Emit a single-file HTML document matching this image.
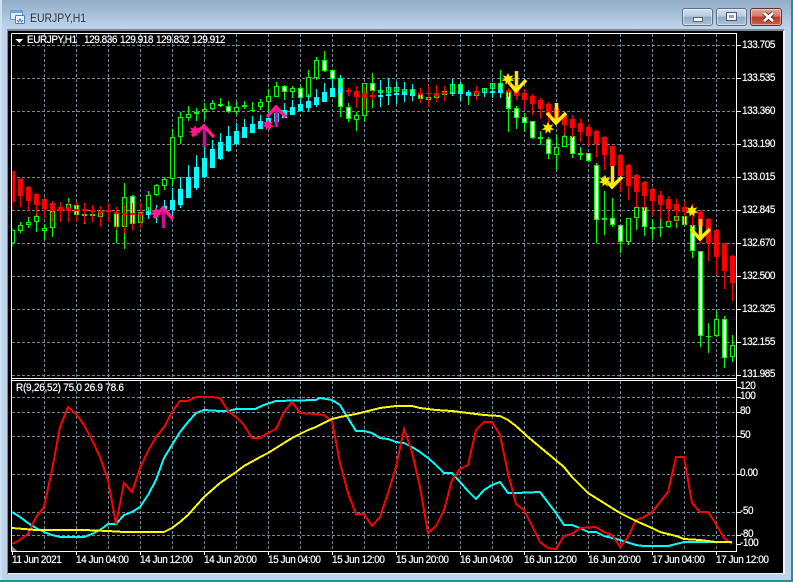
<!DOCTYPE html>
<html><head><meta charset="utf-8"><title>EURJPY,H1</title>
<style>
html,body{margin:0;padding:0;background:#bcd4ec}
#w{position:relative;width:793px;height:582px;overflow:hidden;background:linear-gradient(#93adc8 0,#a4bdd6 12px,#bdd4ec 28px,#bcd4ec 100%);font-family:"Liberation Sans",sans-serif}
#c{position:absolute;left:8px;top:31px;width:775px;height:542px;background:#000}
.t{position:absolute;color:#fff;font-size:10px;line-height:12px;white-space:pre;letter-spacing:-.45px;transform:scaleY(1.12);text-shadow:0 0 .6px #dfeaff}
.b{position:absolute;top:8px;height:16px;border:1px solid #5c6f84;border-radius:3px;background:linear-gradient(#cfdff0 0,#b6cce2 45%,#8fa9c4 50%,#aac3dc 100%);box-shadow:inset 0 0 0 1px rgba(255,255,255,.45)}
svg{position:absolute;left:0;top:0}
</style></head><body><div id="w">
<div style="position:absolute;left:0;top:0;width:2px;height:582px;background:#cfe0f0"></div>
<div style="position:absolute;left:7px;top:29px;width:777px;height:2px;background:#7d8894"></div>
<div style="position:absolute;left:7px;top:29px;width:1px;height:545px;background:#7d8894"></div>
<div style="position:absolute;left:8px;top:573px;width:777px;height:1px;background:#eef3f8"></div>
<div style="position:absolute;left:783px;top:31px;width:2px;height:543px;background:#eef3f8"></div>
<div style="position:absolute;left:0;top:580px;width:793px;height:2px;background:#2a8c96"></div>
<div style="position:absolute;left:791px;top:0;width:2px;height:582px;background:#2a8c96"></div>
<div id="c"></div>
<svg width="793" height="582" viewBox="0 0 793 582" shape-rendering="crispEdges">
<defs>
<clipPath id="m"><rect x="12" y="34" width="724" height="344"/></clipPath>
<clipPath id="s"><rect x="12" y="381" width="724" height="170"/></clipPath>
<path id="st" d="M0-6L1.6-2.6 5.2-3.6 3.2-.6 6 1.6 2.4 2 2.4 5.6 0 3 -2.4 5.6-2.4 2-6 1.6-3.2-.6-5.2-3.6-1.6-2.6Z"/>
</defs>
<g shape-rendering="auto">
<rect x="10.5" y="10.5" width="12" height="9" rx="1" fill="#dfeaf7" stroke="#5b8fd0"/>
<rect x="10.5" y="10.5" width="12" height="2.5" fill="#6fa3e0"/>
<rect x="15.5" y="15.5" width="9" height="8" rx="1" fill="#f2f7fd" stroke="#4a7fc4"/>
<path d="M17 20l1.500 2 1.500-3 1.500 3 1.500-2" fill="none" stroke="#3d74bd"/>
</g>
<path stroke="#778899" fill="none" stroke-dasharray="3 2" d="M12 45.500H736M12 78.500H736M12 111.500H736M12 144.500H736M12 177.500H736M12 210.500H736M12 243.500H736M12 276.500H736M12 309.500H736M12 342.500H736M12 375.500H736M12 397.500H736M12 412.500H736M12 436.500H736M12 474.500H736M12 512.500H736M12 535.500H736"/>
<path stroke="#778899" fill="none" stroke-dasharray="3 2" d="M44.500 34V378M76.500 34V378M108.500 34V378M140.500 34V378M172.500 34V378M204.500 34V378M236.500 34V378M268.500 34V378M300.500 34V378M332.500 34V378M364.500 34V378M396.500 34V378M428.500 34V378M460.500 34V378M492.500 34V378M524.500 34V378M556.500 34V378M588.500 34V378M620.500 34V378M652.500 34V378M684.500 34V378M716.500 34V378M44.500 381V551M76.500 381V551M108.500 381V551M140.500 381V551M172.500 381V551M204.500 381V551M236.500 381V551M268.500 381V551M300.500 381V551M332.500 381V551M364.500 381V551M396.500 381V551M428.500 381V551M460.500 381V551M492.500 381V551M524.500 381V551M556.500 381V551M588.500 381V551M620.500 381V551M652.500 381V551M684.500 381V551M716.500 381V551"/>
<g clip-path="url(#m)" fill="none" transform="translate(.5 0)">
<path stroke="#00ff00" d="M12 228V247M20 222V233M28 217V228M36 211V232M44 224V240M52 201V237M60 205V210M68 198V212M76 203V216M84 212V224M92 213V218M100 210V226M108 210V212M116 208V243M124 183V249M132 195V224M140 210V224M148 191V214M156 184V196M164 177V190M172 129V185M180 112V144M188 106V121M196 108V121M204 103V119M212 100V110M220 98V107M228 101V113M236 102V115M244 101V109M252 102V111M260 99V110M268 89V113M276 82V97M284 85V100M292 86V98M300 86V98M308 70V97M316 57V80M324 51V72M332 70V79M340 75V117M348 103V122M356 112V131M364 83V122M372 73V108M380 88V94M388 78V93M396 84V93M404 85V93M412 88V97M420 88V103M428 91V107M436 93V99M444 87V96M452 79V96M460 84V94M468 90V105M476 90V97M484 88V93M492 83V92M500 70V90M508 88V132M516 106V129M524 113V132M532 121V139M540 131V145M548 137V159M556 135V170M564 135V147M572 136V158M580 147V160M588 153V162M596 163V243M604 191V235M612 198V227M620 225V253M628 218V245M636 207V230M644 207V236M652 219V239M660 218V237M668 221V228M676 216V228M684 216V226M692 225V258M700 251V347M708 323V353M716 311V337M724 316V368M732 335V362"/>
<path stroke="#00ff00" stroke-width="5" d="M12 230V243M20 225V231M28 222V225M36 216V222M44 228V231M52 211V228M60 207V209M68 204V210M76 205V215M84 214V216M92 214V216M100 212V217M108 210V212M116 212V227M124 197V227M132 196V224M140 212V223M148 195V212M156 185V195M164 179V186M172 137V179M180 117V137M188 114V118M196 112V114M204 109V112M212 103V109M220 104V106M228 106V112M236 107V112M244 105V107M252 110V111M260 102V107M268 96V102M276 86V97M284 86V92M292 88V92M300 88V98M308 77V97M316 60V78M324 60V71M332 70V79M340 78V107M348 107V119M356 115V120M364 83V116M372 83V91M380 90V93M388 87V93M396 87V92M404 89V92M412 89V96M420 93V99M428 97V100M436 95V98M444 91V95M452 84V93M460 84V93M468 92V96M476 92V96M484 88V93M492 83V89M500 83V90M508 92V109M516 108V118M524 117V123M532 121V138M540 137V139M548 139V154M556 147V155M564 136V147M572 136V154M580 153V155M588 153V161M596 165V220M604 218V220M612 218V225M620 225V242M628 218V242M636 207V218M644 207V227M652 227V229M660 227V228M668 221V227M676 216V221M684 216V225M692 225V251M700 251V336M708 336V337M716 319V336M724 319V358M732 345V357"/>
<path stroke="#000" stroke-width="3" d="M12 231V242M20 226V230M28 223V224M36 217V221M44 229V230M52 212V227M68 205V209M100 213V216M124 198V226M140 213V222M148 196V211M156 186V194M164 180V185M172 138V178M180 118V136M188 115V117M204 110V111M212 104V108M236 108V111M260 103V106M268 97V101M276 87V96M292 89V91M308 78V96M316 61V77M356 116V119M364 84V115M380 91V92M388 88V92M396 88V91M404 90V91M428 98V99M436 96V97M444 92V94M452 85V92M476 93V95M484 89V92M492 84V88M556 148V154M564 137V146M628 219V241M636 208V217M668 222V226M676 217V220M716 320V335M732 346V356"/>
<path stroke="#fff" stroke-width="3" d="M76 206V214M116 213V226M132 197V223M220 105V106M228 107V111M284 87V91M300 89V97M324 61V70M332 71V78M340 79V106M348 108V118M372 84V90M412 90V95M420 94V98M460 85V92M468 93V95M500 84V89M508 93V108M516 109V117M524 118V122M532 122V137M548 140V153M572 137V153M588 154V160M596 166V219M612 219V224M620 226V241M644 208V226M684 217V224M692 226V250M700 252V335M724 320V357"/>
<path stroke="#ff0000" d="M12 171V210M20 178V207M28 186V211M36 193V215M44 197V218M52 201V222M60 202V222M68 202V222M76 202V222M84 203V223M92 205V222M100 206V227M108 203V222M116 207V230M124 205V233M132 203V230M140 203V228M348 88V96M356 86V108M364 87V110M372 90V100M420 88V103M428 85V107M436 85V102M444 86V101M476 86V100M508 88V97M516 80V100M524 90V110M532 94V115M540 98V119M548 102V125M556 105V125M564 112V135M572 115V138M580 119V142M588 124V146M596 130V157M604 136V170M612 146V180M620 154V192M628 164V200M636 174V207M644 181V211M652 188V216M660 191V219M668 196V222M676 199V223M684 201V225M692 204V227M700 210V243M708 218V261M716 229V275M724 243V289M732 255V301"/>
<path stroke="#ff0000" stroke-width="5" d="M12 171V202M20 179V196M28 187V201M36 194V205M44 199V209M52 203V211M60 207V211M68 208V211M76 209V211M84 209V211M92 210V212M100 211V213M108 210V212M116 212V214M124 213V215M132 213V215M140 213V215M348 90V92M356 91V97M364 93V98M372 95V97M420 93V95M428 93V94M436 93V96M444 92V94M476 91V93M508 90V92M516 85V96M524 93V100M532 96V104M540 100V109M548 104V116M556 108V120M564 115V125M572 119V128M580 123V132M588 127V136M596 131V144M604 137V155M612 146V166M620 155V176M628 165V186M636 175V192M644 182V196M652 189V201M660 195V205M668 199V209M676 204V211M684 207V212M692 208V214M700 212V226M708 219V243M716 230V257M724 243V271M732 256V283"/>
<path stroke="#00ffff" d="M148 207V219M156 205V223M164 200V216M172 188V217M180 177V208M188 165V198M196 155V190M204 147V178M212 140V168M220 133V160M228 126V152M236 123V145M244 119V138M252 116V133M260 115V129M268 112V128M276 108V122M284 103V118M292 100V115M300 98V111M308 94V111M316 89V107M324 83V102M332 78V97M340 75V93M380 80V107M388 78V105M396 82V104M404 82V102M412 84V101M452 79V96M460 82V101M468 90V98M484 88V97M492 83V98M500 83V98"/>
<path stroke="#00ffff" stroke-width="5" d="M148 212V215M156 210V214M164 206V213M172 200V210M180 189V205M188 177V198M196 167V188M204 158V177M212 149V168M220 142V159M228 136V151M236 131V144M244 127V138M252 124V133M260 121V129M268 118V128M276 113V122M284 110V118M292 107V115M300 104V111M308 101V108M316 97V105M324 92V102M332 88V97M340 88V93M380 95V97M388 94V96M396 93V95M404 92V95M412 93V96M452 93V94M460 92V94M468 92V95M484 92V93M492 91V93M500 90V93"/>
</g>
<g clip-path="url(#m)" fill="none" shape-rendering="auto">
<g stroke-width="3.500">
<path stroke="#c4109a" d="M204.500 128V147M276.500 108V127M163.500 210V228"/>
<path stroke="#ff1a8c" d="M192 136L204 126 214 137M267 117L276 107 286 117M154 218L163 208 173 219"/>
<path stroke="#ffe600" d="M516.500 71V92M556.500 103V123M612.500 166V187M700.500 219V240"/>
<path stroke="#ffee00" d="M507 80L516 91 526 80M547 113L556 123 566 113M603 177L612 187 622 177M691 229L700 239 710 229"/>
</g>
<use href="#st" x="195" y="131" fill="#ff1a8c"/>
<use href="#st" x="268" y="125" fill="#ff1a8c"/>
<use href="#st" x="156" y="213" fill="#ff1a8c"/>
<use href="#st" x="508" y="79" fill="#ffee00" stroke="#a89200" stroke-width=".5"/>
<use href="#st" x="548" y="128" fill="#ffee00" stroke="#a89200" stroke-width=".5"/>
<use href="#st" x="605" y="181" fill="#ffee00" stroke="#a89200" stroke-width=".5"/>
<use href="#st" x="692" y="211" fill="#ffee00" stroke="#a89200" stroke-width=".5"/>
</g>
<g clip-path="url(#s)" fill="none" stroke-width="2">
<polyline stroke="#00ffff" points="12,512 20,517 28,523 36,528 44,532 52,535 60,537 84,537 92,534 100,530 108,524 116,524 124,515 132,512 140,507 148,495 156,480 164,458 172,445 180,432 188,422 196,413 204,410 220,411 228,411 236,409 255,409 264,405 276,401 316,400 320,398 332,400 340,405 348,418 356,431 364,431 372,433 380,438 388,439 396,442 404,443 412,447 420,452 428,458 436,465 444,473 452,473 460,482 468,491 476,499 484,490 492,485 500,482 508,493 516,493 540,492 556,513 564,525 572,525 580,528 588,532 596,532 604,536 620,540 636,545 644,546 668,546 684,542 708,542 732,542"/>
<polyline stroke="#ff0000" points="12,544 20,540 28,534 36,517 44,507 52,470 60,427 68,407 76,414 84,425 92,440 100,457 108,480 116,524 124,483 132,492 140,468 148,451 156,437 164,427 172,412 180,401 188,401 196,397 212,397 220,398 228,411 236,417 244,425 252,438 260,438 268,433 276,429 284,412 292,402 300,413 316,414 324,415 332,421 340,463 348,493 356,514 364,514 372,526 380,517 388,493 396,467 404,429 412,452 420,487 428,533 436,526 444,510 452,480 460,469 468,465 476,430 484,422 492,422 500,435 508,473 516,504 524,510 528,518 540,542 548,548 556,549 564,536 572,534 580,528 596,527 604,532 612,535 620,547 628,537 636,520 644,517 652,512 660,502 668,492 676,457 684,457 692,503 700,512 708,512 716,524 724,538 732,544"/>
<polyline stroke="#ffff00" points="12,528 36,530 84,530 108,531 124,532 164,532 172,528 180,522 188,515 204,497 220,483 236,472 244,466 264,455 268,453 276,448 292,438 308,430 316,427 332,419 340,417 356,414 364,412 380,408 396,406 412,406 420,408 436,410 452,411 468,413 484,415 500,416 508,420 516,426 528,437 540,447 564,467 572,477 588,493 604,503 620,513 636,521 652,528 660,532 676,536 684,539 700,540 716,542 732,542"/>
</g>
<path d="M12 551V546L17 551Z" fill="#808080"/>
<path stroke="#fff" fill="none" d="M11.500 33.500H736.500V551.500H11.500V33.500M12 378.500H737M12 380.500H737M737 45.500H741M737 78.500H741M737 111.500H741M737 144.500H741M737 177.500H741M737 210.500H741M737 243.500H741M737 276.500H741M737 309.500H741M737 342.500H741M737 375.500H741M737 387.500H741M737 397.500H741M737 412.500H741M737 436.500H741M737 474.500H741M737 512.500H741M737 535.500H741M737 544.500H741M12.500 552V555M76.500 552V555M140.500 552V555M204.500 552V555M268.500 552V555M332.500 552V555M396.500 552V555M460.500 552V555M524.500 552V555M588.500 552V555M652.500 552V555M716.500 552V555"/>
<path d="M15 39H23L19 43Z" fill="#fff"/>
</svg>
<div style="position:absolute;left:30px;top:11px;font-size:12px;line-height:14px;color:#26303c;text-shadow:0 0 4px rgba(255,255,255,.5);transform:scaleX(.87);transform-origin:left center">EURJPY,H1</div>
<div class="b" style="left:682px;width:29px"><div style="position:absolute;left:10px;top:8px;width:10px;background:#f4f7fa;border:1px solid #55606c;box-sizing:border-box;height:5px"></div></div>
<div class="b" style="left:716px;width:29px"><div style="position:absolute;left:9px;top:3px;width:11px;height:9px;border:1px solid #4e5a66;box-sizing:border-box;background:#eef2f6"><div style="margin:2px;height:3px;background:#8fa5bb"></div></div></div>
<div class="b" style="left:750px;width:30px;border-color:#6b2a2a;background:linear-gradient(#e0a596 0,#d27a6a 45%,#b8392a 50%,#c9604e 100%)"></div>
<svg width="793" height="582" style="pointer-events:none"><path d="M764 13L773 21M773 13L764 21" stroke="#4a2a2a" stroke-width="4.500"/><path d="M764 13L773 21M773 13L764 21" stroke="#fff" stroke-width="2.800"/></svg>
<div class="t" style="left:27px;top:35px">EURJPY,H1</div>
<div class="t" style="left:84px;top:35px">129.836</div>
<div class="t" style="left:120px;top:35px">129.918</div>
<div class="t" style="left:156px;top:35px">129.832</div>
<div class="t" style="left:192px;top:35px">129.912</div>
<div class="t" style="left:16px;top:383px;letter-spacing:-.25px">R(9,26,52) 75.0 26.9 78.6</div>
<div class="t" style="left:742px;top:40px">133.705</div>
<div class="t" style="left:742px;top:73px">133.535</div>
<div class="t" style="left:742px;top:106px">133.360</div>
<div class="t" style="left:742px;top:139px">133.190</div>
<div class="t" style="left:742px;top:172px">133.015</div>
<div class="t" style="left:742px;top:205px">132.845</div>
<div class="t" style="left:742px;top:238px">132.670</div>
<div class="t" style="left:742px;top:271px">132.500</div>
<div class="t" style="left:742px;top:304px">132.325</div>
<div class="t" style="left:742px;top:337px">132.155</div>
<div class="t" style="left:742px;top:369px">131.985</div>
<div class="t" style="left:740px;top:381px">120</div>
<div class="t" style="left:740px;top:391px">100</div>
<div class="t" style="left:740px;top:406px">80</div>
<div class="t" style="left:740px;top:430px">50</div>
<div class="t" style="left:740px;top:468px">0.00</div>
<div class="t" style="left:740px;top:506px">-50</div>
<div class="t" style="left:740px;top:529px">-80</div>
<div class="t" style="left:740px;top:538px">-100</div>
<div class="t" style="left:12px;top:555px">11 Jun 2021</div>
<div class="t" style="left:76px;top:555px">14 Jun 04:00</div>
<div class="t" style="left:140px;top:555px">14 Jun 12:00</div>
<div class="t" style="left:204px;top:555px">14 Jun 20:00</div>
<div class="t" style="left:268px;top:555px">15 Jun 04:00</div>
<div class="t" style="left:332px;top:555px">15 Jun 12:00</div>
<div class="t" style="left:396px;top:555px">15 Jun 20:00</div>
<div class="t" style="left:460px;top:555px">16 Jun 04:00</div>
<div class="t" style="left:524px;top:555px">16 Jun 12:00</div>
<div class="t" style="left:588px;top:555px">16 Jun 20:00</div>
<div class="t" style="left:652px;top:555px">17 Jun 04:00</div>
<div class="t" style="left:716px;top:555px">17 Jun 12:00</div>
</div></body></html>
